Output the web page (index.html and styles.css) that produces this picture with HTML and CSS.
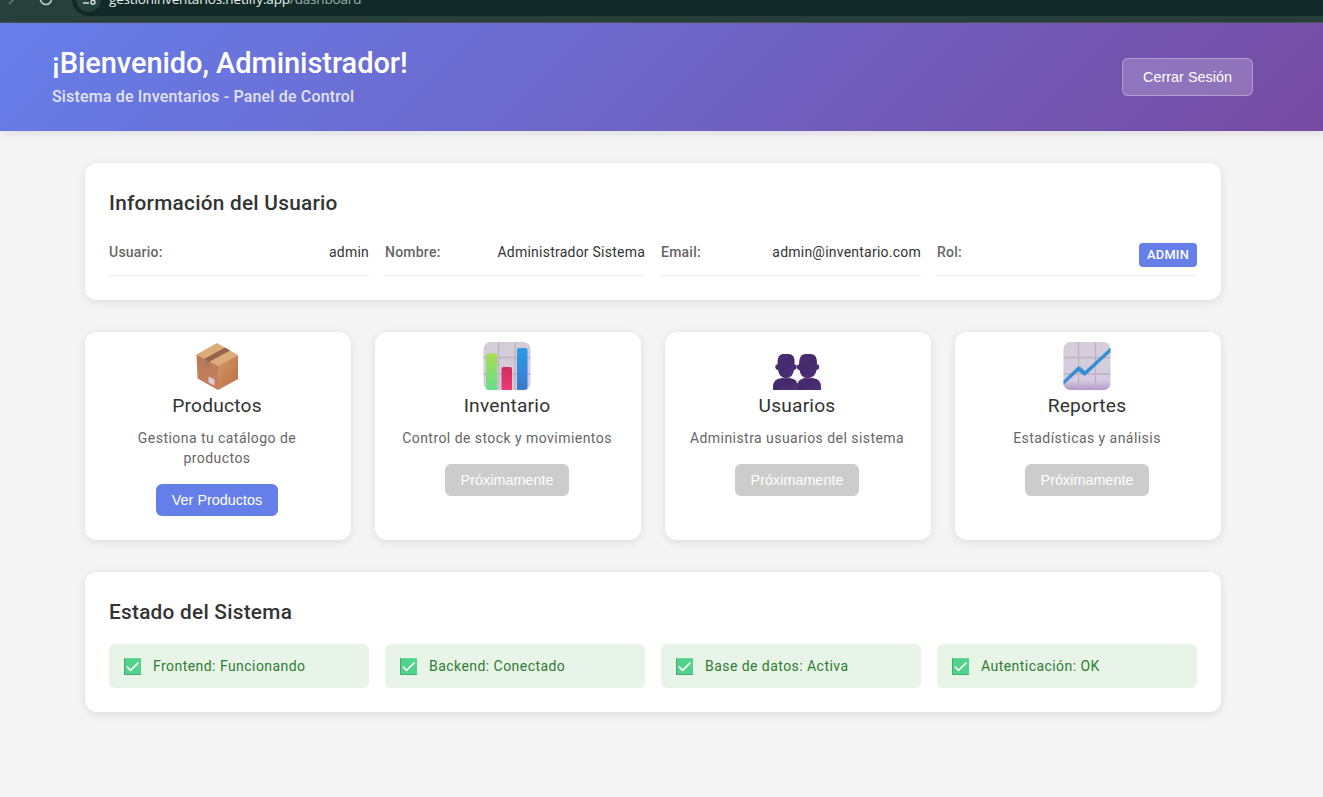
FILE: index.html
```html
<!DOCTYPE html>
<html lang="es">
<head>
<meta charset="UTF-8">
<title>Sistema de Inventarios</title>
<link rel="stylesheet" href="styles.css">
</head>
<body>
<svg class="defs" aria-hidden="true">
  <defs>
    <linearGradient id="tile" x1="0" y1="0" x2="0" y2="1"><stop offset="0" stop-color="#d5ced9"/><stop offset=".8" stop-color="#d6cbe0"/><stop offset="1" stop-color="#b596cb"/></linearGradient>
    <linearGradient id="tileGray" x1="0" y1="0" x2="0" y2="1"><stop offset="0" stop-color="#d3ccd7"/><stop offset="1" stop-color="#d6cedb"/></linearGradient>
    <linearGradient id="barGreen" x1="0" y1="0" x2="0" y2="1"><stop offset="0" stop-color="#a9dd50"/><stop offset="1" stop-color="#65de91"/></linearGradient>
    <linearGradient id="barPink" x1="0" y1="0" x2="0" y2="1"><stop offset="0" stop-color="#cf2c66"/><stop offset="1" stop-color="#ef3974"/></linearGradient>
    <linearGradient id="barBlue" x1="0" y1="0" x2="0" y2="1"><stop offset="0" stop-color="#2b9cec"/><stop offset="1" stop-color="#3c78cc"/></linearGradient>
    <linearGradient id="boxLeft" x1="0" y1="0" x2="0" y2="1"><stop offset="0" stop-color="#b87b57"/><stop offset="1" stop-color="#c9805b"/></linearGradient>
    <linearGradient id="boxRight" x1="0" y1="0" x2="1" y2="1"><stop offset="0" stop-color="#d39a67"/><stop offset="1" stop-color="#bc6c42"/></linearGradient>
    <linearGradient id="person" x1="0" y1="0" x2="1" y2="1"><stop offset="0" stop-color="#4b2e72"/><stop offset=".5" stop-color="#432a6c"/><stop offset="1" stop-color="#583080"/></linearGradient>
    <symbol id="check" viewBox="0 0 17 17"><path fill="#51d38b" d="M0 0h17v17H0z"/><path fill="#3fae72" d="M0 0h1v17H0zM0 16h17v1H0z"/><path fill="#66dd99" d="M1 0h16v1H1z"/><path d="M3.300 9l3.200 3.400 7.400-7.300" fill="none" stroke="#fff" stroke-width="1.600" stroke-linecap="round" stroke-linejoin="round"/></symbol>
  </defs>
</svg>

<div class="browser">
  <svg class="browser-nav" width="60" height="8" viewBox="0 0 60 8" fill="none"><path d="M9 4l5-5" stroke="#6c7d78" stroke-width="1.500"/><path d="M40.500-1a5.500 5.500 0 0 0 11 0" stroke="#b9cbc5" stroke-width="1.700"/></svg>
  <div class="address">
    <span class="site-info"><svg width="16" height="12" viewBox="0 0 16 12" fill="none" stroke="#d3dedb" stroke-width="1.500"><path d="M2 6h6M2 10h6"/><circle cx="12" cy="9.200" r="2"/><path d="M10 4.500h4"/></svg></span>
    <span class="url">gestioninventarios.netlify.app<span class="path">/dashboard</span></span>
  </div>
</div>

<header class="header">
  <div class="welcome">
    <h1>¡Bienvenido, Administrador!</h1>
    <p>Sistema de Inventarios - Panel de Control</p>
  </div>
  <button class="logout">Cerrar Sesión</button>
</header>

<main class="content">
  <section class="panel">
    <h2>Información del Usuario</h2>
    <div class="grid">
      <div class="info"><strong>Usuario:</strong><span>admin</span></div>
      <div class="info"><strong>Nombre:</strong><span>Administrador Sistema</span></div>
      <div class="info"><strong>Email:</strong><span>admin@inventario.com</span></div>
      <div class="info"><strong>Rol:</strong><span class="badge">ADMIN</span></div>
    </div>
  </section>

  <section class="cards">
    <article class="card">
      <svg class="icon" viewBox="0 0 48 48"><path fill="#dbac77" d="M24 1L45 13 25 24.500 3.500 12.500z"/><path fill="url(#boxLeft)" d="M3.500 12.500L25 24v24L4.500 36.500z"/><path fill="url(#boxRight)" d="M25 24l20-11v24L25 48z"/><path fill="#956351" d="M32 5.500l5 3L16 20v4.500l-5-3V17z"/><path fill="#a97661" d="M11 17l5 3v4.500l-5-3z"/><path fill="#dccbdc" d="M15.500 34.500l6 3v6l-6-3z"/></svg>
      <h3>Productos</h3>
      <p>Gestiona tu catálogo de productos</p>
      <button class="action">Ver Productos</button>
    </article>
    <article class="card">
      <svg class="icon" viewBox="0 0 48 48"><rect x=".5" width="47" height="48" rx="7" fill="url(#tileGray)"/><path d="M15.500 0v48M32 0v48M.5 15.500h47M.5 32h47" stroke="#bab2bd" stroke-width="1.300"/><path fill="url(#barGreen)" d="M3 47V13.500q0-2 2-2h7q2 0 2 2V48H7q-3 0-4-1z"/><path fill="url(#barPink)" d="M18.500 48V27q0-2 2-2H27q2 0 2 2v21z"/><path fill="url(#barBlue)" d="M34 48V8q0-2 2-2h6.500q2 0 2 2v38.500q-1 1.500-4 1.500z"/></svg>
      <h3>Inventario</h3>
      <p>Control de stock y movimientos</p>
      <button class="action" disabled>Próximamente</button>
    </article>
    <article class="card">
      <svg class="icon" viewBox="0 0 48 48"><g fill="url(#person)"><path d="M0 48v-3q0-8 8-8.800h9q8 .8 8 8.800v3z"/><path d="M4.500 22.500q-2.200-.5-2.200 2.200 0 3 2.700 3.300 1 7.500 8 8.500 7-1 8-8.500 2.700-.3 2.700-3.300 0-2.700-2.200-2.200Q22.500 12 16 12h-6q-6 0-5.500 10.500z"/><path d="M24 48v-3q0-8 8-8.800h8q8 .8 8 8.800v3z"/><path d="M26 22.500q-2.200-.5-2.200 2.200 0 3 2.700 3.300 1 7.500 8 8.500 8-1 9-8.500 2.700-.3 2.700-3.300 0-2.700-2.200-2.200Q44.500 12 38 12h-6q-6 0-6 10.500z"/></g><path d="M8 36.400q5 2.500 10 0M30 36.400q6 2.500 11 0" fill="none" stroke="#35205c" stroke-width=".8"/></svg>
      <h3>Usuarios</h3>
      <p>Administra usuarios del sistema</p>
      <button class="action" disabled>Próximamente</button>
    </article>
    <article class="card">
      <svg class="icon" viewBox="0 0 48 48"><rect x=".5" width="47" height="48" rx="7" fill="url(#tile)"/><path d="M15.500 0v48M32.500 0v48M.5 15.500h47M.5 32h47" stroke="#bab2bd" stroke-width="1.300"/><path d="M.5 38.500V43L15.500 29l4.500 4q1.500 1 3 0L47.500 10V5.500L22 29l-4.500-4q-1.500-1-3 0z" fill="#368fd3"/></svg>
      <h3>Reportes</h3>
      <p>Estadísticas y análisis</p>
      <button class="action" disabled>Próximamente</button>
    </article>
  </section>

  <section class="panel">
    <h2>Estado del Sistema</h2>
    <div class="grid">
      <div class="status"><svg><use href="#check"/></svg><span>Frontend: Funcionando</span></div>
      <div class="status"><svg><use href="#check"/></svg><span>Backend: Conectado</span></div>
      <div class="status"><svg><use href="#check"/></svg><span>Base de datos: Activa</span></div>
      <div class="status"><svg><use href="#check"/></svg><span>Autenticación: OK</span></div>
    </div>
  </section>
</main>
</body>
</html>
```
FILE: styles.css
```css
* { box-sizing: border-box; margin: 0; padding: 0; }
body { background: #f4f4f4; color: #333; font: 14px/20px Roboto, sans-serif; letter-spacing: 0.45px; height: 797px; overflow: hidden; }
.defs { position: absolute; width: 0; height: 0; }

.browser { height: 23px; display: flex; align-items: flex-start; background: #28403b; border-bottom: 1px solid #4b524f; overflow: hidden; }
.browser-nav { flex: none; margin-right: 12px; }
.address { flex: 1; height: 34px; margin-top: -18px; border-radius: 17px 0 0 17px; background: #112a27; display: flex; align-items: center; gap: 8px; padding-left: 4px; }
.site-info { width: 25px; height: 25px; border-radius: 50%; background: #28403b; display: flex; align-items: center; justify-content: center; }
.url { color: #e4eeeb; font: 13.500px/20px "Open Sans", sans-serif; letter-spacing: -0.17px; }
.path { color: #9fb0ab; }

.header { height: 108px; padding: 0 70px 0 52px; display: flex; justify-content: space-between; align-items: center; background: linear-gradient(135deg, #667eea 0%, #764ba2 100%); box-shadow: 0 2px 10px rgba(0, 0, 0, .1); color: #fff; }
.welcome { padding-bottom: 2px; }
h1 { font-size: 29px; font-weight: 500; line-height: 40px; letter-spacing: -0.06px; }
.header p { font-size: 16px; font-weight: 500; line-height: 24px; letter-spacing: 0.17px; opacity: .8; margin-top: 2px; }
.logout { width: 131px; height: 38px; border: 1px solid rgba(255, 255, 255, .3); border-radius: 6px; background: rgba(255, 255, 255, .2); color: #fff; font: 14.400px "Liberation Sans", Arial, sans-serif; }

.content { width: 1136px; margin: 32px 0 0 85px; display: flex; flex-direction: column; gap: 32px; }
.panel, .card { background: #fff; border-radius: 12px; box-shadow: 0 2px 10px rgba(0, 0, 0, .1); }
.panel { padding: 24px; }
h2 { font-size: 20.800px; font-weight: 500; line-height: 32px; letter-spacing: 0.25px; margin-bottom: 16px; }
.grid { display: grid; grid-template-columns: repeat(4, 1fr); gap: 16px; }
.info { height: 41px; padding: 8px 0; display: flex; justify-content: space-between; border-bottom: 1px solid #eee; line-height: 18px; letter-spacing: 0.23px; }
.info strong { font-weight: 500; color: #666; }
.badge { height: 24px; padding: 0 8px; border-radius: 4px; background: #667eea; color: #fff; font-size: 12.800px; font-weight: 500; line-height: 24px; }

.cards { display: grid; grid-template-columns: repeat(4, 1fr); gap: 24px; }
.card { height: 208px; padding: 10px 25px 24px 23px; display: flex; flex-direction: column; align-items: center; text-align: center; }
.icon { width: 48px; height: 48px; flex: none; }
h3 { font-size: 19.200px; font-weight: 400; line-height: 32px; letter-spacing: 0.2px; margin-bottom: 6px; }
.card p { color: #666; margin-bottom: 16px; }
.action { height: 32px; padding: 0 16px; border: 0; border-radius: 6px; background: #667eea; color: #fff; font: 14.400px "Liberation Sans", Arial, sans-serif; }
.action:disabled { background: #ccc; }

.status { height: 44px; padding-left: 15px; display: flex; align-items: center; gap: 12px; border-radius: 6px; background: #e8f4e8; color: #2e7d32; }
.status svg { width: 17px; height: 17px; }
```
